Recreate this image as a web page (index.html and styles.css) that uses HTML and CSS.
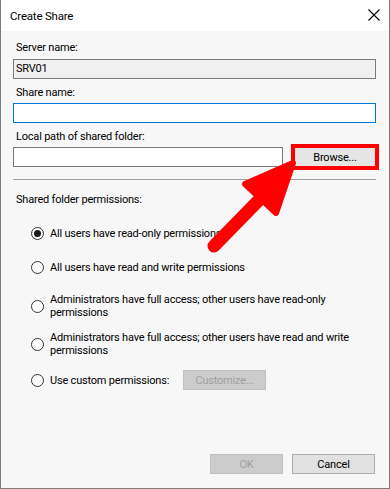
FILE: index.html
```html
<!DOCTYPE html>
<html>
<head>
<meta charset="utf-8">
<link rel="stylesheet" href="styles.css">
</head>
<body>
<div class="window">
  <div class="titlebar">
    <span class="title">Create Share</span>
    <svg class="close" width="12" height="12" viewBox="0 0 12 12"><path d="M0.5 0.5 L11.5 11.5 M11.5 0.5 L0.5 11.5" stroke="#000" stroke-width="1.1" fill="none"/></svg>
  </div>
  <div class="content">
    <div class="label l-server">Server name:</div>
    <div class="input readonly">SRV01</div>
    <div class="label l-share">Share name:</div>
    <div class="input focused"></div>
    <div class="label l-path">Local path of shared folder:</div>
    <div class="path-row">
      <div class="input path"></div>
      <div class="btn browse">Browse...</div>
    </div>
    <div class="separator"></div>
    <div class="label l-perm">Shared folder permissions:</div>
    <div class="radios">
      <div class="radio-row"><span class="radio checked"></span><span class="rtext">All users have read-only permissions</span></div>
      <div class="radio-row"><span class="radio"></span><span class="rtext">All users have read and write permissions</span></div>
      <div class="radio-row"><span class="radio"></span><span class="rtext multi">Administrators have full access; other users have read-only permissions</span></div>
      <div class="radio-row"><span class="radio"></span><span class="rtext multi">Administrators have full access; other users have read and write permissions</span></div>
      <div class="radio-row"><span class="radio"></span><span class="rtext">Use custom permissions:</span><div class="btn disabled customize">Customize...</div></div>
    </div>
    <div class="footer">
      <div class="btn disabled ok">OK</div>
      <div class="btn cancel">Cancel</div>
    </div>
  </div>
  <div class="highlight"></div>
  <svg class="arrow" width="390" height="489" viewBox="0 0 390 489">
    <line x1="214" y1="246" x2="258" y2="201" stroke="#ff0000" stroke-width="13" stroke-linecap="round"/>
    <polygon points="245,184 293,163 276,213" fill="#ff0000" stroke="#ff0000" stroke-width="6" stroke-linejoin="round"/>
  </svg>
</div>
</body>
</html>
```
FILE: styles.css
```css
* { box-sizing: border-box; }
html, body { margin: 0; padding: 0; }
body {
  font-family: Roboto, "Liberation Sans", sans-serif;
  font-size: 11px;
  letter-spacing: -0.2px;
  color: #000;
  background: #fff;
}
.window {
  position: relative;
  width: 390px;
  height: 489px;
  border: 1px solid #7c7c7c;
  border-top: none;
  background: #f7f7f7;
  display: flex;
  flex-direction: column;
  overflow: hidden;
}
.titlebar {
  height: 31px;
  background: #fff;
  display: flex;
  align-items: center;
  justify-content: space-between;
  padding: 0 9px 0 9px;
  flex: none;
}
.title { font-size: 11.5px; padding-top: 1px; }
.close { margin-top: -1px; }
.content {
  flex: 1;
  display: flex;
  flex-direction: column;
  padding: 0 13px 14px 12px;
}
.label {
  line-height: 15px;
  padding-left: 3px;
}
.l-server { margin-top: 9px; }
.l-share { margin-top: 6px; }
.l-path { margin-top: 6px; }
.l-perm { margin-top: 12px; }
.input {
  height: 20px;
  border: 1px solid #7a7a7a;
  background: #fff;
  padding: 0 2px;
  line-height: 18px;
  margin-top: 4px;
}
.input.readonly { background: #f0f0f0; }
.input.focused { border-color: #0078d7; margin-top: 3px; }
.path-row {
  display: flex;
  gap: 11px;
  margin-top: 3px;
}
.input.path { flex: 1; margin-top: 0; }
.btn {
  height: 20px;
  border: 1px solid #adadad;
  background: #e1e1e1;
  display: flex;
  align-items: center;
  justify-content: center;
}
.browse { width: 82px; background: #e5e5e5; }
.separator {
  height: 1px;
  background: #a0a0a0;
  margin-top: 12px;
}
.radios {
  display: grid;
  grid-template-rows: 34px 35px 42px 34px 38px;
  align-items: center;
  margin-top: 9px;
}
.radio-row {
  display: flex;
  align-items: center;
  padding-left: 18px;
}
.radio {
  width: 13px;
  height: 13px;
  border: 1px solid #333;
  border-radius: 50%;
  background: #fff;
  flex: none;
  display: flex;
  align-items: center;
  justify-content: center;
  margin-right: 6px;
}
.radio.checked::after {
  content: "";
  width: 7px;
  height: 7px;
  border-radius: 50%;
  background: #1a1a1a;
}
.rtext { line-height: 15px; }
.rtext.multi { line-height: 13px; }
.btn.disabled {
  background: #cccccc;
  border-color: #bfbfbf;
  color: #a0a0a0;
}
.customize { width: 83px; margin-left: 14px; }
.footer {
  margin-top: auto;
  display: flex;
  justify-content: flex-end;
  gap: 9px;
  padding-right: 1px;
}
.ok { width: 73px; }
.cancel { width: 83px; }
.highlight {
  position: absolute;
  left: 290px;
  top: 144px;
  width: 88px;
  height: 26px;
  border: 4px solid #ff0000;
}
.arrow {
  position: absolute;
  left: -1px;
  top: 0;
  pointer-events: none;
}
```
